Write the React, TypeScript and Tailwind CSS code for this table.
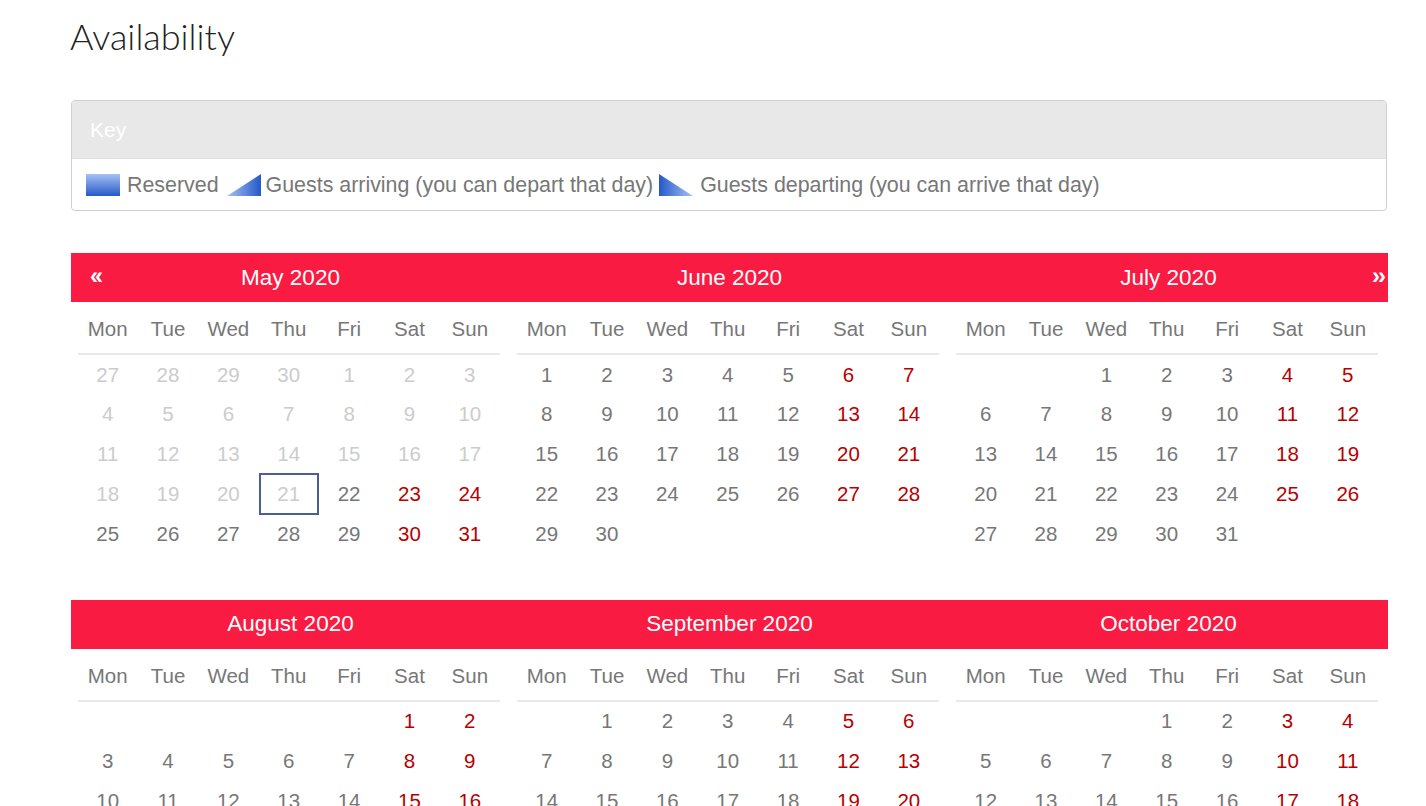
import React from "react";

type MonthSpec = { y: number; m: number; title: string; prev?: boolean; left?: boolean; right?: boolean };

const DAYS = ["Mon", "Tue", "Wed", "Thu", "Fri", "Sat", "Sun"];

type Cell = { d: number; past: boolean; weekend: boolean; selected?: boolean } | null;

function buildCells(spec: MonthSpec): Cell[][] {
  const first = new Date(spec.y, spec.m, 1);
  const lead = (first.getDay() + 6) % 7;
  const daysIn = new Date(spec.y, spec.m + 1, 0).getDate();
  const prevDays = new Date(spec.y, spec.m, 0).getDate();
  const cells: Cell[] = [];
  for (let i = 0; i < lead; i++) {
    if (spec.prev) {
      cells.push({ d: prevDays - lead + 1 + i, past: true, weekend: i >= 5 });
    } else cells.push(null);
  }
  for (let d = 1; d <= daysIn; d++) {
    const col = cells.length % 7;
    const past = spec.y === 2020 && spec.m === 4 && d < 22;
    cells.push({ d, past, weekend: col >= 5, selected: spec.m === 4 && d === 21 });
  }
  while (cells.length % 7 !== 0) cells.push(null);
  const rows: Cell[][] = [];
  for (let i = 0; i < cells.length; i += 7) rows.push(cells.slice(i, i + 7));
  return rows;
}

function Month({ spec }: { spec: MonthSpec }) {
  const rows = buildCells(spec);
  return (
    <div className="flex flex-col">
      <div className="relative h-[49px] bg-[#f91b42] flex items-center justify-center text-white text-[22.5px]">
        {spec.left && (
          <span className="absolute left-[19px] top-[11px] font-bold text-[24px] leading-[24px] tracking-[-3px]">‹‹</span>
        )}
        <span>{spec.title}</span>
        {spec.right && (
          <span className="absolute right-[4px] top-[11px] font-bold text-[24px] leading-[24px] tracking-[-2px]">››</span>
        )}
      </div>
      <div className="pl-[6.5px] pr-[10px]">
        <div className="grid grid-cols-7 h-[53px] items-center border-b-2 border-[#e9e9e9] text-[#777] text-[20.5px]">
          {DAYS.map((d) => (
            <div key={d} className="text-center pt-[4px]">
              {d}
            </div>
          ))}
        </div>
        {rows.map((r, ri) => (
          <div key={ri} className="grid grid-cols-7 h-[39.75px] text-[20.5px]">
            {r.map((c, ci) => (
              <div key={ci} className="relative flex items-center justify-center">
                {c && (
                  <>
                    {c.selected && (
                      <span className="absolute left-0 right-0 top-[-1px] bottom-[-1px] border-2 border-[#4b5c9e]" />
                    )}
                    <span
                      className={
                        c.past
                          ? "text-[#cccccc]"
                          : c.weekend
                          ? "text-[#b80000]"
                          : "text-[#777777]"
                      }
                    >
                      {c.d}
                    </span>
                  </>
                )}
              </div>
            ))}
          </div>
        ))}
      </div>
    </div>
  );
}

export default function App() {
  const block1: MonthSpec[] = [
    { y: 2020, m: 4, title: "May 2020", prev: true, left: true },
    { y: 2020, m: 5, title: "June 2020" },
    { y: 2020, m: 6, title: "July 2020", right: true },
  ];
  const block2: MonthSpec[] = [
    { y: 2020, m: 7, title: "August 2020" },
    { y: 2020, m: 8, title: "September 2020" },
    { y: 2020, m: 9, title: "October 2020" },
  ];
  return (
    <div className="bg-white min-h-screen font-['Liberation_Sans',Arial,sans-serif]">
      <div className="w-[1317px] ml-[71px] pt-[14px]">
        <h1 className="font-['Lato',sans-serif] font-light text-[36px] leading-[44px] text-[#222] ml-[-1px]">
          Availability
        </h1>
        <div className="mt-[42px] border border-[#cfcfcf] rounded-[4px] overflow-hidden w-[1316px]">
          <div className="h-[57px] bg-[#e8e8e8] flex items-center px-[18px] text-white text-[21px]">Key</div>
          <div className="h-[52px] border-t border-[#e0e0e0] flex items-center pl-[14px] text-[#777] text-[21.4px] whitespace-nowrap pt-[1px]">
            <svg width="34" height="22" className="mr-[7px]">
              <defs>
                <linearGradient id="gr" x1="0" y1="0" x2="0" y2="1">
                  <stop offset="0" stopColor="#a7c1f4" />
                  <stop offset="1" stopColor="#2559c8" />
                </linearGradient>
              </defs>
              <rect x="0" y="0" width="34" height="22" fill="url(#gr)" />
            </svg>
            <span>Reserved</span>
            <svg width="34" height="22" className="ml-[8px] mr-[5px]">
              <defs>
                <linearGradient id="ga" x1="0" y1="0" x2="1" y2="0">
                  <stop offset="0" stopColor="#a7c1f4" />
                  <stop offset="1" stopColor="#2559c8" />
                </linearGradient>
              </defs>
              <polygon points="34,0 34,22 0,22" fill="url(#ga)" />
            </svg>
            <span>Guests arriving (you can depart that day)</span>
            <svg width="34" height="22" className="ml-[6px] mr-[7px]">
              <defs>
                <linearGradient id="gd" x1="0" y1="0" x2="1" y2="0">
                  <stop offset="0" stopColor="#2559c8" />
                  <stop offset="1" stopColor="#a7c1f4" />
                </linearGradient>
              </defs>
              <polygon points="0,0 0,22 34,22" fill="url(#gd)" />
            </svg>
            <span>Guests departing (you can arrive that day)</span>
          </div>
        </div>
        <div className="mt-[42px] grid grid-cols-3 w-[1317px]">
          {block1.map((s) => (
            <Month key={s.title} spec={s} />
          ))}
        </div>
        <div className="mt-[46px] grid grid-cols-3 w-[1317px]">
          {block2.map((s) => (
            <Month key={s.title} spec={s} />
          ))}
        </div>
      </div>
    </div>
  );
}
